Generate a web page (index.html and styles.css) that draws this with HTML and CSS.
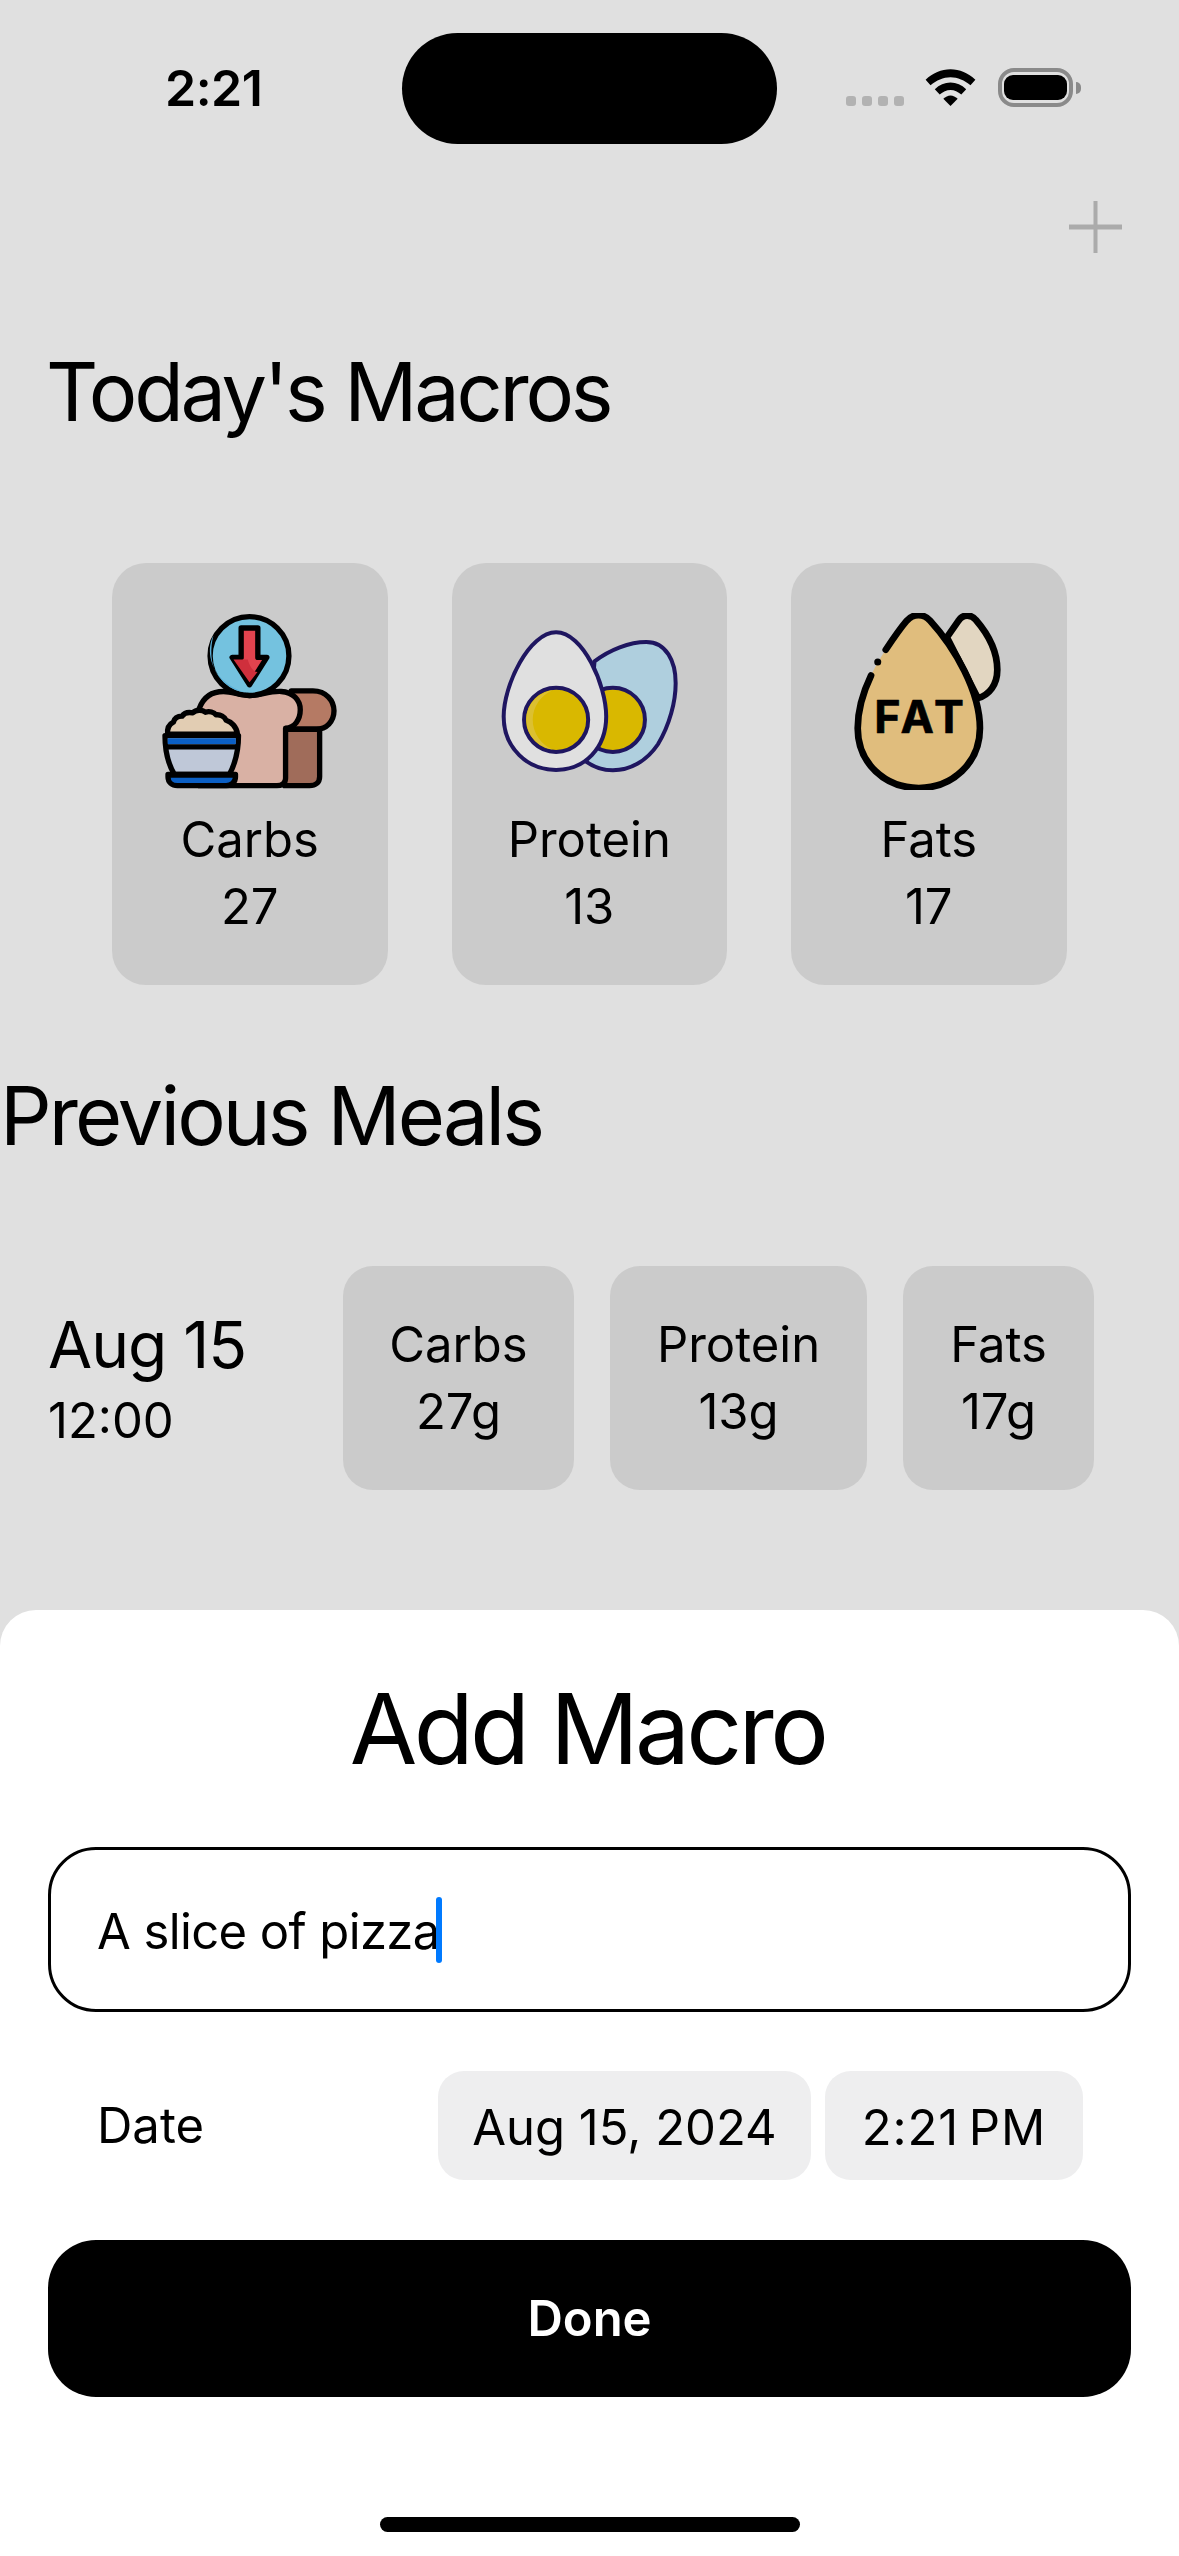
FILE: index.html
```html
<!DOCTYPE html>
<html lang="en">
<head>
<meta charset="utf-8">
<title>Today's Macros</title>
<link rel="stylesheet" href="styles.css">
</head>
<body>
<div class="screen">
  <header class="status">
    <div class="status-left"><span class="time">2:21</span></div>
    <div class="island"></div>
    <div class="status-right">
      <div class="signal"><i></i><i></i><i></i><i></i></div>
      <svg class="wifi" viewBox="288 55 152 113"><path d="M288 88C310 67 336 56 364 56C392 56 418 67 440 88L425 105C407 89 386 80 364 80C342 80 321 89 303 105Z"/><path d="M316 117C330 103 346 96 364 96C382 96 398 103 412 117L397 133C387 124 376 119 364 119C352 119 341 124 331 133Z"/><path d="M342 146C349 140 356 136 364 136C372 136 379 140 386 146L364 168Z"/></svg>
      <div class="battery"><div class="battery-fill"></div></div>
      <div class="battery-nub"></div>
    </div>
  </header>

  <div class="toolbar">
    <svg class="plus" viewBox="0 0 53 52"><path d="M0 26H53" stroke-width="5"/><path d="M26.500 0V52" stroke-width="4"/></svg>
  </div>

  <h1 class="title today">Today's Macros</h1>

  <section class="macros">
    <article class="macro-card">
      <svg class="macro-icon" viewBox="185 185 530 530">
        <path d="M575 418H640C680 418 703 448 703 478C703 510 680 533 650 533H575Z" fill="#b57a64" stroke="#000" stroke-width="16" stroke-linejoin="round"/>
        <path d="M555 533H660V675C660 692 648 702 630 702H555Z" fill="#a06c5a" stroke="#000" stroke-width="16" stroke-linejoin="round"/>
        <path d="M300 470C312 438 335 420 372 420C400 420 420 432 450 432C480 432 510 418 545 420C580 422 602 445 602 475C602 505 585 528 558 530V680C558 693 548 702 532 702H300Z" fill="#d9b1a4" stroke="#000" stroke-width="16" stroke-linejoin="round"/>
        <circle cx="450" cy="314" r="118" fill="#74c2df" stroke="#000" stroke-width="16"/>
        <path d="M342 252C322 290 330 345 370 385C395 408 430 425 450 424C395 424 340 378 336 314C335 290 337 270 342 252Z" fill="#5ab0d8"/>
        <path d="M425 230H475V318H502L450 400L398 318H425Z" fill="#e2434e" stroke="#000" stroke-width="16" stroke-linejoin="round"/>
        <path d="M402 324H445C450 345 462 362 474 362L450 392Z" fill="#cf2f3c"/>
        <path d="M205 548C203 530 210 518 222 512C226 498 238 494 248 494C256 482 270 482 280 484C290 474 308 474 318 482C330 478 344 482 350 490C362 488 376 496 380 506C394 510 412 525 414 548Z" fill="#e2cdb3" stroke="#000" stroke-width="16" stroke-linejoin="round"/>
        <path d="M197 552H417C417 600 405 640 390 668H225C208 640 197 600 197 552Z" fill="#bfc8d8" stroke="#000" stroke-width="16" stroke-linejoin="round"/>
        <path d="M205 560H409V578H205Z" fill="#0b5fc4"/>
        <path d="M200 586H414" stroke="#000" stroke-width="16"/>
        <path d="M206 668H408V676C408 692 395 702 380 702H234C218 702 206 692 206 676Z" fill="#0b5fc4" stroke="#000" stroke-width="16" stroke-linejoin="round"/>
        <path d="M210 670H404" stroke="#000" stroke-width="16"/>
      </svg>
      <div class="macro-name">Carbs</div>
      <div class="macro-value">27</div>
    </article>
    <article class="macro-card">
      <svg class="macro-icon" viewBox="185 185 530 530">
        <path d="M465 330C510 295 570 272 620 272C680 272 708 330 708 395C708 450 690 520 655 578C620 630 570 656 520 656C490 656 465 648 440 630Z" fill="#afcfde" stroke="#1f1660" stroke-width="12"/>
        <circle cx="520" cy="505" r="96" fill="#d9b800" stroke="#1f1660" stroke-width="12"/>
        <path d="M350 243C270 243 193 400 193 495C193 590 265 655 350 655C435 655 500 590 500 495C500 400 430 243 350 243Z" fill="#e0e0e0" stroke="#1f1660" stroke-width="12"/>
        <circle cx="350" cy="505" r="96" fill="#d9b800" stroke="#1f1660" stroke-width="12"/>
        <path d="M340 416C295 422 261 460 261 505C261 550 295 588 340 594C305 580 280 545 280 505C280 465 305 430 340 416Z" fill="#dcc030"/>
      </svg>
      <div class="macro-name">Protein</div>
      <div class="macro-value">13</div>
    </article>
    <article class="macro-card">
      <svg class="macro-icon" viewBox="185 185 530 530">
        <path d="M505 258L540 208C552 188 578 188 592 206C630 250 656 300 656 355C656 400 632 430 598 440Z" fill="#e2d6c1" stroke="#000" stroke-width="20" stroke-linecap="round" stroke-linejoin="round"/>
        <path d="M385 208C405 186 435 186 455 208C530 290 604 420 604 530C604 635 520 709 421 709C320 709 238 635 238 530C238 470 255 420 278 372C300 325 345 255 385 208Z" fill="#e0bd7d"/>
        <path d="M322 295C340 268 362 235 385 208C405 186 435 186 455 208C530 290 604 420 604 530C604 635 520 709 421 709C320 709 238 635 238 530C238 470 255 420 278 372" fill="none" stroke="#000" stroke-width="20" stroke-linecap="round"/>
        <circle cx="298" cy="332" r="10.500"/>
        <text class="fat-label" x="428" y="545" text-anchor="middle">FAT</text>
      </svg>
      <div class="macro-name">Fats</div>
      <div class="macro-value">17</div>
    </article>
  </section>

  <h1 class="title previous">Previous Meals</h1>

  <section class="meal">
    <div class="meal-when">
      <div class="meal-date">Aug 15</div>
      <div class="meal-time">12:00</div>
    </div>
    <div class="meal-chips">
      <div class="chip chip-carbs"><span>Carbs</span><span>27g</span></div>
      <div class="chip chip-protein"><span>Protein</span><span>13g</span></div>
      <div class="chip chip-fats"><span>Fats</span><span>17g</span></div>
    </div>
  </section>

  <section class="sheet">
    <h2 class="sheet-title">Add Macro</h2>
    <div class="field"><span class="field-text">A slice of pizza</span><span class="caret"></span></div>
    <div class="date-row">
      <span class="date-label">Date</span>
      <div class="date-pills">
        <span class="pill pill-date">Aug 15, 2024</span>
        <span class="pill pill-time">2:21 PM</span>
      </div>
    </div>
    <button class="done">Done</button>
    <div class="home-indicator"></div>
  </section>
</div>
</body>
</html>
```
FILE: styles.css
```css
* { box-sizing: border-box; }
html, body { margin: 0; padding: 0; }
body { font-family: Inter, "Liberation Sans", sans-serif; color: #000; }

.screen {
  width: 1179px;
  height: 2556px;
  background: #e0e0e0;
  display: flex;
  flex-direction: column;
  overflow: hidden;
}

.status {
  display: grid;
  grid-template-columns: 402px 375px 402px;
  padding-top: 33px;
  height: 144px;
}
.status-left { padding: 30px 0 0 165px; }
.time { display: block; font-size: 50px; font-weight: 600; line-height: 50px; letter-spacing: -0.5px; }
.island { background: #000; border-radius: 56px; height: 111px; }
.status-right { display: flex; align-items: flex-start; padding: 35px 0 0 69px; }
.signal { display: flex; gap: 6px; margin: 28px 21px 0 0; }
.signal i { width: 10px; height: 10px; border-radius: 3px; background: #b2b2b2; }
.wifi { width: 51px; height: 37px; margin: 1px 22px 0 0; display: block; }
.battery { width: 75px; height: 39px; border: 4px solid #8a8a8a; border-radius: 16px; padding: 3px 2px; }
.battery-fill { background: #000; height: 100%; border-radius: 9px; }
.battery-nub { width: 5px; height: 12px; margin: 14px 0 0 3px; background: #8a8a8a; border-radius: 0 6px 6px 0; }

.toolbar { display: flex; justify-content: flex-end; padding: 57px 57px 0 0; }
.plus { width: 53px; height: 52px; display: block; }
.plus path { stroke: #ababab; fill: none; }

.title { margin: 0; font-size: 81px; font-weight: 400; line-height: 100px; letter-spacing: -3.200px; }
.today { padding-left: 46px; margin-top: 89px; }
.previous { margin-top: 81px; letter-spacing: -2.900px; }

.macros { display: flex; gap: 64px; padding-left: 112px; margin-top: 121px; }
.macro-card {
  width: 275.500px;
  height: 422px;
  background: #cbcbcb;
  border-radius: 34px;
  display: flex;
  flex-direction: column;
  align-items: center;
  padding-top: 50px;
}
.macro-icon { width: 177px; height: 177px; display: block; }
.macro-name, .macro-value { font-size: 49px; line-height: 67px; }
.macro-name { margin-top: 16px; }

.meal { display: flex; align-items: flex-start; padding-left: 48px; margin-top: 100px; }
.meal-when { width: 295px; padding-top: 40px; }
.meal-date { font-size: 64px; line-height: 78px; letter-spacing: -1px; }
.meal-time { font-size: 49px; line-height: 62px; margin-top: 6px; }
.meal-chips { display: flex; gap: 36px; }
.chip {
  height: 224px;
  background: #cbcbcb;
  border-radius: 30px;
  display: flex;
  flex-direction: column;
  align-items: center;
  justify-content: center;
  font-size: 49px;
  line-height: 67px;
}
.chip-carbs { width: 231px; }
.chip-protein { width: 257px; }
.chip-fats { width: 191px; }

.sheet {
  margin-top: auto;
  height: 946px;
  background: #fff;
  border-radius: 36px 36px 0 0;
  display: flex;
  flex-direction: column;
  padding: 0 48px;
}
.sheet-title { margin: 59px 0 0; padding-right: 4px; font-size: 98px; font-weight: 400; line-height: 120px; text-align: center; letter-spacing: -3.700px; }
.field {
  margin-top: 58px;
  height: 165px;
  border: 3px solid #000;
  border-radius: 48px;
  display: flex;
  align-items: center;
  padding-left: 46px;
  font-size: 49px;
  letter-spacing: -0.600px;
}
.field-text { padding-top: 4px; }
.caret { width: 6px; height: 66px; margin-left: -4px; background: #007aff; border-radius: 3px; }
.date-row { display: flex; align-items: center; justify-content: space-between; margin-top: 59px; padding: 0 48px 0 49px; font-size: 49px; }
.date-pills { display: flex; gap: 14px; }
.pill { height: 109px; background: #eeeeef; border-radius: 26px; display: flex; align-items: center; justify-content: center; padding-top: 4px; }
.pill-date { width: 373px; }
.pill-time { width: 258px; word-spacing: -5px; letter-spacing: 0.900px; }
.done {
  margin-top: 60px;
  height: 157px;
  border: 0;
  border-radius: 48px;
  background: #000;
  color: #fff;
  font: 600 49px Inter, "Liberation Sans", sans-serif;
}
.home-indicator { width: 420px; height: 15px; border-radius: 8px; background: #000; margin: 120px auto 0; }

.fat-label { font-family: Inter, "Liberation Sans", sans-serif; font-size: 134px; font-weight: 700; letter-spacing: 12px; stroke: #000; stroke-width: 2px; stroke-linejoin: round; }
```
